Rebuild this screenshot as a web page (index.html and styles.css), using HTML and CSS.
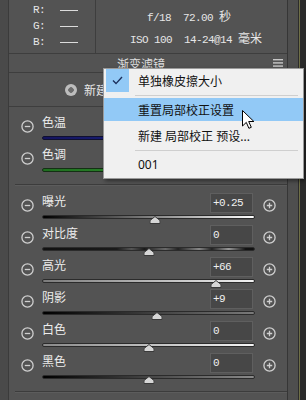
FILE: index.html
```html
<!DOCTYPE html>
<html lang="zh-CN">
<head>
    <meta charset="UTF-8">
    <title>渐变滤镜</title>
    <link rel="stylesheet" href="styles.css">
</head>
<body>
    <div class="app">
        <div class="edge-left"></div>
        <div class="panel">
            <div class="info">
                <div class="rgb">
                    <div class="rgb-row"><span class="rgb-key">R:</span><i class="rgb-dash"></i></div>
                    <div class="rgb-row"><span class="rgb-key">G:</span><i class="rgb-dash"></i></div>
                    <div class="rgb-row"><span class="rgb-key">B:</span><i class="rgb-dash"></i></div>
                </div>
                <div class="exif">
                    <div class="exif-shutter">f/18&nbsp;&nbsp;72.00 <span class="cjk">秒</span></div>
                    <div>ISO 100&nbsp;&nbsp;14-24@14 <span class="cjk">毫米</span></div>
                </div>
            </div>

            <div class="section-title">
                <span>渐变滤镜</span>
                <svg class="hamburger" width="10" height="8" viewBox="0 0 10 8">
                    <rect x="0" y="0" width="10" height="1.4"/>
                    <rect x="0" y="3.2" width="10" height="1.4"/>
                    <rect x="0" y="6.4" width="10" height="1.4"/>
                </svg>
            </div>

            <div class="mode-row">
                <span class="radio"></span>
                <span>新建</span>
            </div>

            <div class="group group-color">
                <div class="slider-row">
                    <svg class="step" viewBox="0 0 13 13"><circle cx="6.5" cy="6.5" r="5.6"/><path d="M3.8 6.5h5.4"/></svg>
                    <div class="slider-body">
                        <div class="slider-head"><span class="slider-label">色温</span><span class="slider-value"></span></div>
                        <div class="track track-temp"></div>
                    </div>
                    <svg class="step" viewBox="0 0 13 13"><circle cx="6.5" cy="6.5" r="5.6"/><path d="M3.8 6.5h5.4M6.5 3.8v5.4"/></svg>
                </div>
                <div class="slider-row">
                    <svg class="step" viewBox="0 0 13 13"><circle cx="6.5" cy="6.5" r="5.6"/><path d="M3.8 6.5h5.4"/></svg>
                    <div class="slider-body">
                        <div class="slider-head"><span class="slider-label">色调</span><span class="slider-value"></span></div>
                        <div class="track track-tint"></div>
                    </div>
                    <svg class="step" viewBox="0 0 13 13"><circle cx="6.5" cy="6.5" r="5.6"/><path d="M3.8 6.5h5.4M6.5 3.8v5.4"/></svg>
                </div>
            </div>
            <div class="divider"></div>

            <div class="group group-tone">
                <div class="slider-row">
                    <svg class="step" viewBox="0 0 13 13"><circle cx="6.5" cy="6.5" r="5.6"/><path d="M3.8 6.5h5.4"/></svg>
                    <div class="slider-body">
                        <div class="slider-head"><span class="slider-label">曝光</span><span class="slider-value">+0.25</span></div>
                        <div class="track track-exposure">
                            <svg class="thumb" style="left:53%" width="11" height="8" viewBox="0 0 11 8"><polygon points="5.5,0.5 10.5,4.5 10.5,7.5 0.5,7.5 0.5,4.5"/></svg>
                        </div>
                    </div>
                    <svg class="step" viewBox="0 0 13 13"><circle cx="6.5" cy="6.5" r="5.6"/><path d="M3.8 6.5h5.4M6.5 3.8v5.4"/></svg>
                </div>
                <div class="slider-row">
                    <svg class="step" viewBox="0 0 13 13"><circle cx="6.5" cy="6.5" r="5.6"/><path d="M3.8 6.5h5.4"/></svg>
                    <div class="slider-body">
                        <div class="slider-head"><span class="slider-label">对比度</span><span class="slider-value">0</span></div>
                        <div class="track track-contrast">
                            <svg class="thumb" style="left:50%" width="11" height="8" viewBox="0 0 11 8"><polygon points="5.5,0.5 10.5,4.5 10.5,7.5 0.5,7.5 0.5,4.5"/></svg>
                        </div>
                    </div>
                    <svg class="step" viewBox="0 0 13 13"><circle cx="6.5" cy="6.5" r="5.6"/><path d="M3.8 6.5h5.4M6.5 3.8v5.4"/></svg>
                </div>
                <div class="slider-row">
                    <svg class="step" viewBox="0 0 13 13"><circle cx="6.5" cy="6.5" r="5.6"/><path d="M3.8 6.5h5.4"/></svg>
                    <div class="slider-body">
                        <div class="slider-head"><span class="slider-label">高光</span><span class="slider-value">+66</span></div>
                        <div class="track track-highlights">
                            <svg class="thumb" style="left:82%" width="11" height="8" viewBox="0 0 11 8"><polygon points="5.5,0.5 10.5,4.5 10.5,7.5 0.5,7.5 0.5,4.5"/></svg>
                        </div>
                    </div>
                    <svg class="step" viewBox="0 0 13 13"><circle cx="6.5" cy="6.5" r="5.6"/><path d="M3.8 6.5h5.4M6.5 3.8v5.4"/></svg>
                </div>
                <div class="slider-row">
                    <svg class="step" viewBox="0 0 13 13"><circle cx="6.5" cy="6.5" r="5.6"/><path d="M3.8 6.5h5.4"/></svg>
                    <div class="slider-body">
                        <div class="slider-head"><span class="slider-label">阴影</span><span class="slider-value">+9</span></div>
                        <div class="track track-shadows">
                            <svg class="thumb" style="left:54%" width="11" height="8" viewBox="0 0 11 8"><polygon points="5.5,0.5 10.5,4.5 10.5,7.5 0.5,7.5 0.5,4.5"/></svg>
                        </div>
                    </div>
                    <svg class="step" viewBox="0 0 13 13"><circle cx="6.5" cy="6.5" r="5.6"/><path d="M3.8 6.5h5.4M6.5 3.8v5.4"/></svg>
                </div>
                <div class="slider-row">
                    <svg class="step" viewBox="0 0 13 13"><circle cx="6.5" cy="6.5" r="5.6"/><path d="M3.8 6.5h5.4"/></svg>
                    <div class="slider-body">
                        <div class="slider-head"><span class="slider-label">白色</span><span class="slider-value">0</span></div>
                        <div class="track track-whites">
                            <svg class="thumb" style="left:50%" width="11" height="8" viewBox="0 0 11 8"><polygon points="5.5,0.5 10.5,4.5 10.5,7.5 0.5,7.5 0.5,4.5"/></svg>
                        </div>
                    </div>
                    <svg class="step" viewBox="0 0 13 13"><circle cx="6.5" cy="6.5" r="5.6"/><path d="M3.8 6.5h5.4M6.5 3.8v5.4"/></svg>
                </div>
                <div class="slider-row">
                    <svg class="step" viewBox="0 0 13 13"><circle cx="6.5" cy="6.5" r="5.6"/><path d="M3.8 6.5h5.4"/></svg>
                    <div class="slider-body">
                        <div class="slider-head"><span class="slider-label">黑色</span><span class="slider-value">0</span></div>
                        <div class="track track-blacks">
                            <svg class="thumb" style="left:50%" width="11" height="8" viewBox="0 0 11 8"><polygon points="5.5,0.5 10.5,4.5 10.5,7.5 0.5,7.5 0.5,4.5"/></svg>
                        </div>
                    </div>
                    <svg class="step" viewBox="0 0 13 13"><circle cx="6.5" cy="6.5" r="5.6"/><path d="M3.8 6.5h5.4M6.5 3.8v5.4"/></svg>
                </div>
            </div>
            <div class="divider"></div>
        </div>
        <div class="edge-right">
            <div class="gutter"></div>
            <div class="rule"></div>
            <div class="outside"></div>
        </div>

        <!-- panel fly-out menu -->
        <div class="menu">
            <div class="menu-item">
                <span class="menu-check">
                    <svg width="11" height="9" viewBox="0 0 11 9"><path d="M1 4.6l3 3 6-6.6"/></svg>
                </span>
                <span>单独橡皮擦大小</span>
            </div>
            <div class="menu-sep"></div>
            <div class="menu-item plain active">重置局部校正设置</div>
            <div class="menu-item plain">新建 局部校正 预设...</div>
            <div class="menu-sep"></div>
            <div class="menu-item plain last">001</div>
        </div>

        <svg class="cursor" width="13" height="19" viewBox="0 0 13 19">
            <path d="M0.5 0.5v15.5l3.8-3.6 2.6 5.9 2.4-1-2.6-5.8h5.2z"/>
        </svg>
    </div>
</body>
</html>
```

FILE: styles.css
```css
* {
    box-sizing: border-box;
}
body {
    margin: 0;
    width: 306px;
    height: 400px;
    overflow: hidden;
    background: #535353;
    font-family: "Noto Sans CJK SC", sans-serif;
    font-size: 12px;
    color: #e8e8e8;
}
.app {
    position: relative;
    display: flex;
    height: 400px;
}
.edge-left {
    width: 9px;
    background: #4a4a4a;
    border-right: 1px solid #3b3b3b;
}
.panel {
    width: 278px;
    display: flex;
    flex-direction: column;
}
.edge-right {
    width: 19px;
    display: flex;
}
.edge-right .gutter {
    width: 12px;
    background: #4e4e4e;
    border-left: 1px solid #363636;
    border-right: 1px solid #2c2c2c;
}
.edge-right .rule {
    width: 1px;
    background: #6f6f46;
}
.edge-right .outside {
    flex: 1;
    background: #2a2a2a;
}

/* info block */
.info {
    height: 54px;
    display: flex;
    border-bottom: 1px solid #3e3e3e;
    font-family: "Liberation Mono", monospace;
    font-size: 11px;
    letter-spacing: -0.6px;
    color: #e6e6e6;
}
.rgb {
    width: 87px;
    padding: 2px 0 0 24px;
    border-right: 1px solid #3e3e3e;
}
.rgb-row {
    display: flex;
    align-items: center;
    height: 16px;
}
.rgb-key {
    width: 27px;
}
.rgb-dash {
    width: 18px;
    height: 1px;
    background: #dcdcdc;
}
.exif {
    flex: 1;
    padding: 6px 0 0 34px;
    line-height: 19px;
    white-space: nowrap;
}
.exif-shutter {
    padding-left: 17px;
}
.cjk {
    font-family: "Noto Sans CJK SC", sans-serif;
    font-size: 12px;
    letter-spacing: 0;
}

.section-title {
    height: 19px;
    display: flex;
    align-items: center;
    border-bottom: 1px solid #3e3e3e;
    color: #dedede;
}
.section-title span {
    margin-left: 108px;
}
.hamburger {
    margin-left: auto;
    margin-right: 4px;
    fill: #c8c8c8;
}

.mode-row {
    height: 34px;
    display: flex;
    align-items: center;
    gap: 7px;
    padding-left: 56px;
    border-bottom: 1px solid #3e3e3e;
}
.radio {
    width: 12px;
    height: 12px;
    border-radius: 50%;
    background: radial-gradient(circle, #6c6c6c 0 2.5px, #bdbdbd 3px);
}

.group-color {
    padding: 5px 0 8px;
}
.group-tone {
    padding: 6px 0 8px;
}
.divider {
    height: 1px;
    margin-left: 6px;
    background: #3c3c3c;
    box-shadow: 0 1px 0 #5c5c5c;
}

/* slider rows */
.slider-row {
    height: 32px;
    display: grid;
    grid-template-columns: 13px 213px 13px;
    column-gap: 8px;
    padding-left: 12px;
}
.step {
    width: 13px;
    height: 13px;
    margin-top: 8px;
    fill: none;
    stroke: #cfcfcf;
    stroke-width: 1.3;
}
.slider-body {
    display: flex;
    flex-direction: column;
}
.slider-head {
    height: 24px;
    display: flex;
    justify-content: space-between;
}
.slider-label {
    line-height: 20px;
    color: #ececec;
}
.slider-value {
    width: 43px;
    height: 20px;
    margin: 2px 2px 0 0;
    padding-left: 2px;
    background: #474747;
    border: 1px solid #5f5f5f;
    font-family: "Liberation Mono", monospace;
    font-size: 11px;
    letter-spacing: -0.6px;
    line-height: 18px;
    color: #f0f0f0;
}
.track {
    position: relative;
    height: 4px;
    border: 1px solid #2b2b2b;
    border-radius: 2px;
}
.thumb {
    position: absolute;
    top: 0;
    transform: translateX(-50%);
    fill: #d6d6d6;
    stroke: #3a3a3a;
    stroke-width: 1;
}
.track-temp {
    background: linear-gradient(to right, #14145e, #1e2c96);
    border-color: #101030;
}
.track-tint {
    background: linear-gradient(to right, #1f6e1f, #3aa03a);
    border-color: #143014;
}
.track-exposure {
    background: linear-gradient(to right, #000, #ffffff);
}
.track-contrast {
    background: linear-gradient(to right, #111 0%, #1a1a1a 35%, #555 42%, #1a1a1a 48%, #6a6a6a 58%, #222 64%, #888 74%, #222 80%, #999 88%, #111 96%);
}
.track-highlights {
    background: linear-gradient(to right, #7c7c7c, #f2f2f2);
}
.track-shadows {
    background: linear-gradient(to right, #000, #7a7a7a);
}
.track-whites {
    background: linear-gradient(to right, #8a8a8a, #f4f4f4);
}
.track-blacks {
    background: linear-gradient(to right, #000, #8a8a8a);
}

/* fly-out menu */
.menu {
    position: absolute;
    left: 103px;
    top: 68px;
    width: 201px;
    padding: 0;
    background: #f0f0f0;
    border: 1px solid #9a9a9a;
    box-shadow: 2px 2px 4px rgba(0, 0, 0, 0.45);
    font-family: "Noto Sans", "Noto Sans CJK SC", sans-serif;
    font-size: 12px;
    color: #111;
}
.menu-item {
    height: 23px;
    margin: 2px 0 3px;
    display: flex;
    align-items: center;
}
.menu-item:first-child {
    margin-top: 0;
}
.menu-item.plain {
    padding-left: 34px;
}
.menu-item.last {
    margin-bottom: 2px;
}
.menu-item.active {
    background: #92c9f6;
}
.menu-check {
    width: 23px;
    height: 23px;
    margin: 0 9px 0 2px;
    display: flex;
    align-items: center;
    justify-content: center;
    background: #92c9f6;
}
.menu-check svg {
    fill: none;
    stroke: #1c2f5c;
    stroke-width: 1.4;
}
.menu-sep {
    height: 1px;
    margin: 0 5px 0 31px;
    background: #cfcfcf;
}

.cursor {
    position: absolute;
    left: 242px;
    top: 110px;
    fill: #fff;
    stroke: #000;
    stroke-width: 1;
    stroke-linejoin: round;
}
```
